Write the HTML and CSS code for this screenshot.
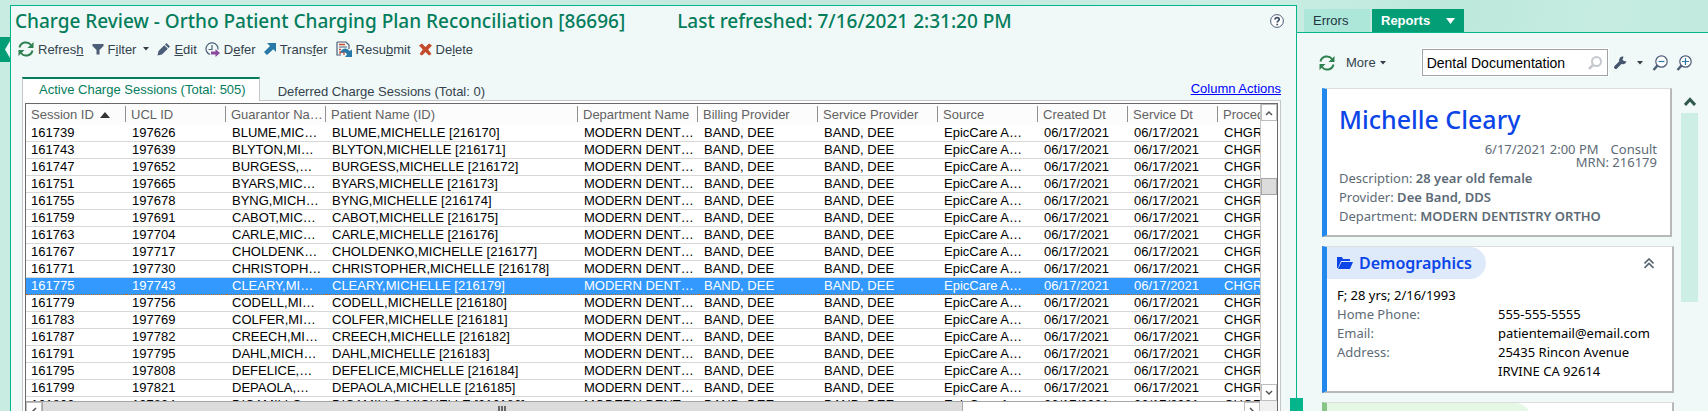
FILE: index.html
```html
<!DOCTYPE html>
<html lang="en">
<head>
<meta charset="utf-8">
<title>Charge Review</title>
<link rel="stylesheet" href="styles.css">
</head>
<body>
<svg class="defs" aria-hidden="true">
  <symbol id="i-refresh" viewBox="0 0 16 16"><path d="M1.500 6.500A6.500 6.500 0 0 1 13 4M14.500 9.500A6.500 6.500 0 0 1 3 12" fill="none" stroke="#2f8050" stroke-width="2"/><path d="M15.500 1v6h-6zM.5 15V9h6z" fill="#2f8050"/></symbol>
  <symbol id="i-up" viewBox="0 0 8 6"><path d="M1 5l3-3 3 3" fill="none" stroke="#555" stroke-width="1.500"/></symbol>
  <symbol id="i-caret" viewBox="0 0 6 4"><path d="M0 0h6L3 3.500z" fill="#333f48"/></symbol>
</svg>
<div class="app">
  <aside class="rail"><button class="rail-tab" aria-label="Expand sidebar"><svg width="10" height="25" viewBox="0 0 10 25"><path d="M10 4v17L5 12.500z" fill="#f0f9f7"/></svg></button></aside>
  <main class="review">
    <header class="title-row">
      <h1>Charge Review - Ortho Patient Charging Plan Reconciliation [86696]</h1>
      <p class="refreshed">Last refreshed: 7/16/2021 2:31:20 PM</p>
      <button class="help" aria-label="Help"><svg width="14" height="14" viewBox="0 0 14 14"><circle cx="7" cy="7" r="6.400" fill="#fff" stroke="#4c5d77"/><path d="M4.900 5.600c0-2.800 4.300-2.600 4.300-.2 0 1.500-2 1.500-2 3.200M7.200 9.800v1.400" fill="none" stroke="#3c4c66" stroke-width="1.700"/></svg></button>
    </header>
    <nav class="toolbar">
      <button><svg width="16" height="16"><use href="#i-refresh"/></svg><span>Refres<u>h</u></span></button>
      <button><svg width="12" height="12" viewBox="0 0 12 12"><path d="M.5 1h11v2L7.500 7v4.500h-3V7L.5 3z" fill="#4c5d77"/></svg><span>F<u>i</u>lter</span><svg class="caret" width="6" height="4"><use href="#i-caret"/></svg></button>
      <button><svg width="13" height="13" viewBox="0 0 13 13"><path d="M.5 12.500l1-4.500 5.800-5.800 3.500 3.500L5 11.500zM8 1.500L9.500 0 13 3.500 11.500 5z" fill="#4c5d77"/></svg><span><u>E</u>dit</span></button>
      <button><svg width="15" height="15" viewBox="0 0 15 15"><path d="M5 12.500A6 6 0 1 1 13 7.500M7 3v4.500H3.500" fill="none" stroke="#4c5d77" stroke-width="1.200"/><path d="M6 9.500h4.500V7l4.500 4-4.500 4v-2.500H6z" fill="#8a4a9e"/></svg><span>D<u>e</u>fer</span></button>
      <button><svg width="12" height="12" viewBox="0 0 12 12"><path d="M3 0h9v9L9.300 6.300 3 12 0 9l6-6z" fill="#2878a8"/></svg><span>Trans<u>f</u>er</span></button>
      <button><svg width="16" height="16" viewBox="0 0 16 16"><path d="M1 1h9l3 3v4M1 1v13h4M3 6h8" fill="none" stroke="#4c5d77" stroke-width="1.200"/><path d="M3 3.500h6M3 8.500h2M4 13v-2h4v3" fill="none" stroke="#c44a32" stroke-width="1.300"/><path d="M5 10c2-3.500 6.500-3.500 8.500 0L16 8.500V16H9l2-2.500C10 11 7.500 10.500 5 12z" fill="#2878a8"/></svg><span>Resu<u>b</u>mit</span></button>
      <button><svg width="13" height="13" viewBox="0 0 13 13"><path d="M0 2.500L3 .5l3.500 3.500L10 .5l3 2L9.200 6.500l3.300 4.500-2.500 1.500-3.500-3.500L3 12.500.5 11l3.300-4.500z" fill="#c44a2c"/></svg><span>De<u>l</u>ete</span></button>
    </nav>
    <div class="tabs">
      <button class="tab active">Active Charge Sessions (Total: 505)</button>
      <button class="tab">Deferred Charge Sessions (Total: 0)</button>
      <a class="column-actions" href="#">Column Actions</a>
    </div>
    <section class="grid-frame">
      <div class="grid">
        <div class="grid-view">
          <table>
            <colgroup><col class="c100"><col class="c100"><col class="c100"><col class="c252"><col class="c120"><col class="c120"><col class="c120"><col class="c100"><col class="c90"><col class="c90"><col class="c-last"></colgroup>
            <thead><tr><th>Session ID <svg class="sort" width="10" height="6" viewBox="0 0 10 6"><path d="M0 6l5-6 5 6z" fill="#333"/></svg></th><th>UCL ID</th><th>Guarantor Na…</th><th>Patient Name (ID)</th><th>Department Name</th><th>Billing Provider</th><th>Service Provider</th><th>Source</th><th>Created Dt</th><th>Service Dt</th><th>Proced</th></tr></thead>
            <tbody id="rows"></tbody>
          </table>
        </div>
        <div class="vbar"><button aria-label="Scroll up"><svg width="8" height="6"><use href="#i-up"/></svg></button><div class="vtrack"><div class="vthumb"></div></div><button aria-label="Scroll down"><svg class="down" width="8" height="6"><use href="#i-up"/></svg></button></div>
        <div class="hbar"><button aria-label="Scroll left"><svg class="left" width="8" height="6"><use href="#i-up"/></svg></button><div class="htrack"><div class="hthumb"><i></i><i></i><i></i></div></div><button aria-label="Scroll right"><svg class="right" width="8" height="6"><use href="#i-up"/></svg></button></div>
        <div class="corner"></div>
      </div>
    </section>
    <span class="splitter"></span>
  </main>
  <aside class="side">
    <div class="side-tabs"><button>Errors</button><button class="on">Reports <svg width="9" height="6" viewBox="0 0 9 6"><path d="M0 0h9L4.500 6z" fill="#fff"/></svg></button></div>
    <div class="side-body">
      <div class="side-tools">
        <button aria-label="Refresh"><svg width="16" height="16"><use href="#i-refresh"/></svg></button>
        <button class="more">More <svg width="6" height="4"><use href="#i-caret"/></svg></button>
        <label class="search"><input type="text" value="Dental Documentation" aria-label="Report"><svg width="14" height="14" viewBox="0 0 14 14"><circle cx="8.500" cy="5.500" r="4.500" fill="none" stroke="#c5c9cf" stroke-width="2"/><path d="M5 9l-4 4" stroke="#c5c9cf" stroke-width="2.500"/></svg></label>
        <button class="wrench" aria-label="Settings"><svg width="13" height="13" viewBox="0 0 13 13"><path d="M1.800 11.200L7.500 5.500" stroke="#46566f" stroke-width="3.400" stroke-linecap="round"/><path d="M9.500.5a3.800 3.800 0 1 0 3 5L10 5 8.500 4z" fill="#46566f"/></svg><svg width="6" height="4"><use href="#i-caret"/></svg></button>
        <button class="zoom-out" aria-label="Zoom out"><svg width="16" height="16" viewBox="0 0 16 16"><circle cx="9.500" cy="6.500" r="5.700" fill="#fff" stroke="#4c5d77" stroke-width="1.200"/><path d="M5.500 10.500l-4 4.500" stroke="#4c5d77" stroke-width="2.500"/><path d="M6.500 6.500h6" stroke="#2878a8" stroke-width="1.200"/></svg></button>
        <button aria-label="Zoom in"><svg width="16" height="16" viewBox="0 0 16 16"><circle cx="9.500" cy="6.500" r="5.700" fill="#fff" stroke="#4c5d77" stroke-width="1.200"/><path d="M5.500 10.500l-4 4.500" stroke="#4c5d77" stroke-width="2.500"/><path d="M6 6.500h7M9.500 3v7" stroke="#2878a8" stroke-width="1.200"/></svg></button>
      </div>
      <div class="report">
        <div class="cards">
          <section class="card patient">
            <h2>Michelle Cleary</h2>
            <p class="visit"><span>6/17/2021 2:00 PM</span><span>Consult</span></p>
            <p class="visit">MRN: 216179</p>
            <p>Description: <b>28 year old female</b></p>
            <p>Provider: <b>Dee Band, DDS</b></p>
            <p>Department: <b>MODERN DENTISTRY ORTHO</b></p>
          </section>
          <section class="card demo">
            <header><h3><svg width="16" height="14" viewBox="0 0 16 14"><path d="M0 12V1h5l1 2h7v2H4L1 12zM4.500 6H16l-3 7H1z" fill="#0b45e8"/></svg>Demographics</h3><button aria-label="Collapse"><svg width="10" height="11" viewBox="0 0 10 11"><path d="M.5 5.500L5 1l4.500 4.500M.5 10L5 5.500 9.500 10" fill="none" stroke="#566570" stroke-width="1.600"/></svg></button></header>
            <p>F; 28 yrs; 2/16/1993</p>
            <dl><dt>Home Phone:</dt><dd>555-555-5555</dd><dt>Email:</dt><dd>patientemail@email.com</dd><dt>Address:</dt><dd>25435 Rincon Avenue<br>IRVINE CA 92614</dd></dl>
          </section>
          <section class="card next"><header><h3><svg width="16" height="14" viewBox="0 0 16 14"><path d="M5 8l3 4v2H2v-2z" fill="#4f7d4f"/></svg></h3></header></section>
        </div>
        <div class="side-scroll"><button aria-label="Scroll up"><svg width="12" height="9" viewBox="0 0 12 9"><path d="M1 8l5-5.500L11 8" fill="none" stroke="#2f5a4c" stroke-width="3"/></svg></button><div class="side-thumb"></div></div>
      </div>
    </div>
  </aside>
</div>
<script src="rows.js"></script>
</body>
</html>
```
FILE: rows.js
```js
const patients = [
  ["BLUME", "BLUME,MIC…"], ["BLYTON", "BLYTON,MI…"], ["BURGESS", "BURGESS,…"], ["BYARS", "BYARS,MIC…"],
  ["BYNG", "BYNG,MICH…"], ["CABOT", "CABOT,MIC…"], ["CARLE", "CARLE,MIC…"], ["CHOLDENKO", "CHOLDENK…"],
  ["CHRISTOPHER", "CHRISTOPH…"], ["CLEARY", "CLEARY,MI…"], ["CODELL", "CODELL,MI…"], ["COLFER", "COLFER,MI…"],
  ["CREECH", "CREECH,MI…"], ["DAHL", "DAHL,MICH…"], ["DEFELICE", "DEFELICE,…"], ["DEPAOLA", "DEPAOLA,…"],
  ["DICAMILLO", "DICAMILLO…"]
];
const body = document.getElementById("rows");
patients.forEach(([surname, guarantor], i) => {
  const row = body.insertRow();
  if (surname === "CLEARY") row.className = "selected";
  [161739 + 4 * i, 197626 + 13 * i, guarantor, `${surname},MICHELLE [${216170 + i}]`, "MODERN DENT…", "BAND, DEE", "BAND, DEE", "EpicCare A…", "06/17/2021", "06/17/2021", "CHGR"].forEach(text => { row.insertCell().textContent = text; });
});
```
FILE: styles.css
```css
* { box-sizing: border-box; }
body { margin: 0; background: #c8ece2; font: 13px "Liberation Sans", Arial, sans-serif; color: #000; }
h1, h2, h3, p, dl, dd { margin: 0; }
button { border: 0; background: none; padding: 0; font: inherit; color: inherit; }
svg { display: block; flex: none; }
.defs { position: absolute; width: 0; height: 0; }
.app { display: grid; grid-template: 100vh / 10px minmax(0, 1287fr) minmax(0, 411fr); overflow: hidden; background: linear-gradient(100deg, #c8ece2 0 30%, #c1e8dd 45%, #caeee4 70%, #bde8dc 82%, #c6ece1 90%, #bfe8dc); }
.rail { padding-top: 32px; }
.rail-tab { display: block; width: 10px; height: 25px; margin-top: 5px; background: #049e76; }
.review { position: relative; display: flex; flex-direction: column; min-height: 0; margin-top: 5px; border: 1px solid #04b58b; border-bottom: 0; background: #f0f9f7; }
.title-row { display: flex; height: 30px; padding: 0 12px 0 4px; align-items: center; color: #047d5c; font: 500 19px/30px "Noto Sans", sans-serif; }
.title-row h1, .refreshed { font: inherit; white-space: pre; }
.refreshed { margin-left: 52px; }
.help { margin-left: auto; }
.toolbar { display: flex; gap: 8px; height: 26px; padding-left: 7px; align-items: center; color: #34424e; }
.toolbar button { display: flex; gap: 4px; align-items: center; white-space: nowrap; }
.toolbar .caret { margin-left: 3px; }
.tabs { display: flex; flex: none; margin: 15px 15px 0 11px; height: 24px; color: #34424e; }
.tab { padding: 5px 18px 0; height: 24px; border-bottom: 1px solid #c6c6c6; white-space: nowrap; }
.tab.active { padding: 0 13px 2px 16px; border: 1px solid #c6c6c6; border-top: 2px solid #047d5c; border-bottom: 0; background: #fff; color: #047d5c; }
.column-actions { flex: 1; border-bottom: 1px solid #c6c6c6; text-align: right; line-height: 24px; color: #00f; }
.grid-frame { flex: 1; display: flex; min-height: 0; margin: 0 15px 0 11px; padding: 2px 2px 0; border: 1px solid #c6c6c6; border-width: 0 1px; background: #fff; }
.grid { flex: 1; display: grid; grid-template: minmax(0, 1fr) 17px / minmax(0, 1fr) 17px; min-width: 0; margin-bottom: -8px; border: 1px solid #696969; }
.grid-view { overflow: hidden; }
table { width: 100%; border-collapse: separate; border-spacing: 0; table-layout: fixed; }
.c90 { width: 90px; } .c100 { width: 100px; } .c120 { width: 120px; } .c252 { width: 252px; }
th, td { overflow: hidden; white-space: nowrap; text-align: left; }
th { height: 21px; padding: 0 0 1px 5px; background: linear-gradient(#909090, #909090) right 2px / 1px 16px no-repeat #fcfcfc; font-weight: 400; color: #626262; }
th:last-child { background: #fcfcfc; }
td { height: 17px; padding: 0 0 0 6px; line-height: 16px; border-bottom: 1px solid #d8d8d8; }
td:first-child { padding-left: 5px; }
.sort { display: inline-block; margin-left: 3px; vertical-align: 1px; }
.selected td { background: #3399ff; color: #fff; border-bottom: 1px dotted #b86a20; }
.vbar { display: flex; flex-direction: column; border-left: 1px solid #c6c6c6; background: #fff; }
.vbar button, .hbar button { display: flex; flex: none; width: 16px; height: 17px; align-items: center; justify-content: center; border: 1px solid #bdbdbd; background: #fff; }
.vtrack { flex: 1; display: grid; grid-template-rows: 57fr 17px 189fr; }
.vthumb { grid-row: 2; border: 1px solid #a6a6a6; background: #dcdcdc; }
.down { transform: rotate(180deg); } .left { transform: rotate(-90deg); } .right { transform: rotate(90deg); }
.hbar { display: flex; height: 17px; border-top: 1px solid #a6a6a6; background: #fff; }
.htrack { flex: 1; display: grid; grid-template-columns: 919fr 281fr; }
.hthumb { display: flex; gap: 1px; height: 16px; padding-top: 4px; justify-content: center; border: 1px solid #a6a6a6; border-top: 0; background: #dcdcdc; }
.hthumb i { width: 2px; height: 6px; background: #666; }
.corner { background: #f0f0f0; }
.splitter { position: absolute; right: -7px; bottom: 0; width: 13px; height: 13px; background: #04b58b; z-index: 1; }
.side { display: flex; flex-direction: column; min-width: 0; }
.side-tabs { display: flex; flex: none; gap: 2px; height: 33px; padding: 9px 0 0 7px; border-bottom: 1px solid #04b58b; }
.side-tabs button { width: 66px; padding: 0 9px; background: #ade7da; color: #1e3440; text-align: left; }
.side-tabs .on { display: flex; width: 92px; align-items: center; justify-content: space-between; background: #049e76; color: #fff; font-weight: 700; }
.side-body { flex: 1; min-height: 0; padding: 16px 10px 0 22px; background: #f0f9f7; }
.side-tools { display: flex; height: 27px; align-items: center; color: #34424e; }
.side-tools button { display: flex; align-items: center; }
.side-tools .more { gap: 4px; margin: 0 36px 0 11px; }
.search { display: flex; width: 186px; height: 27px; padding: 0 5px 0 4px; align-items: center; border: 1px solid #a0a4a4; outline: 1px solid #fff; background: #fff; }
.search input { flex: 1; min-width: 0; padding: 0; border: 0; outline: 0; font: inherit; font-size: 14px; }
.side-tools .wrench { gap: 10px; margin: 0 9px 0 6px; }
.zoom-out { margin-right: 8px; }
.report { display: flex; gap: 7px; padding-top: 12px; padding-left: 3px; }
.cards { flex: 1; min-width: 0; }
.card { margin-bottom: 9px; border: 1px solid #ddd; border-left: 5px solid #2388ee; border-right: 2px solid #b8b8b8; border-bottom: 2px solid #b8b8b8; background: #fff; font: 13px/19px "Noto Sans", sans-serif; }
.patient { height: 149px; margin-right: 2px; padding: 12px 13px 0 12px; color: #5d6b76; }
.patient h2 { height: 42px; font: 500 25px/37px "Noto Sans", sans-serif; color: #0b45e8; }
.patient .visit { display: flex; gap: 12px; height: 13px; justify-content: flex-end; line-height: 13px; }
.patient b { font-weight: 600; }
.demo { height: 147px; }
.card header { display: flex; justify-content: space-between; align-items: center; padding-right: 18px; }
.card h3 { display: flex; gap: 6px; width: 159px; height: 32px; padding-left: 10px; align-items: center; border-radius: 0 16px 16px 0; background: #dee9f9; font: 600 16px/32px "Noto Sans", sans-serif; color: #0b45e8; }
.demo p { padding: 7px 10px 0; }
.demo dl { display: grid; grid-template-columns: 161px 1fr; padding-left: 10px; }
.demo dt { color: #5d6b76; }
.card.next { border-left-color: #86c586; }
.next h3 { width: 204px; background: #e5f7e5; }
.side-scroll { width: 17px; flex: none; }
.side-scroll button { display: flex; width: 17px; height: 25px; padding-top: 2px; align-items: center; justify-content: center; }
.side-thumb { height: 189px; background: #cdeee5; }
```
